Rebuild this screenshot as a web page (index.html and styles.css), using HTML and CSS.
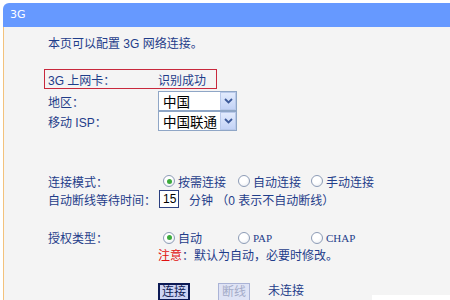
FILE: index.html
```html
<!DOCTYPE html>
<html>
<head>
<meta charset="utf-8">
<link rel="stylesheet" href="styles.css">
</head>
<body>
<div class="win">
  <div class="title">3G</div>
  <div class="body">
    <p class="intro">本页可以配置 3G 网络连接。</p>
    <div class="status"><span class="lbl">3G 上网卡：</span><span>识别成功</span></div>
    <div class="row sel-row">
      <span class="lbl">地区：</span>
      <div class="select"><span class="sv">中国</span><span class="arrow"><svg width="9" height="6" viewBox="0 0 9 6"><path d="M1 1 L4.5 4.5 L8 1" fill="none" stroke="#3d5a9a" stroke-width="1.8"/></svg></span></div>
    </div>
    <div class="row sel-row">
      <span class="lbl">移动 ISP：</span>
      <div class="select"><span class="sv">中国联通</span><span class="arrow"><svg width="9" height="6" viewBox="0 0 9 6"><path d="M1 1 L4.5 4.5 L8 1" fill="none" stroke="#3d5a9a" stroke-width="1.8"/></svg></span></div>
    </div>
    <div class="row mode-row">
      <span class="lbl">连接模式：</span>
      <div class="opts">
        <span class="opt o1"><span class="radio on"></span><span class="ol">按需连接</span></span>
        <span class="opt o2"><span class="radio"></span><span class="ol">自动连接</span></span>
        <span class="opt"><span class="radio"></span><span class="ol">手动连接</span></span>
      </div>
    </div>
    <div class="row time-row">
      <span class="lbl">自动断线等待时间：</span>
      <span class="input">15</span>
      <span class="unit">分钟 （0 表示不自动断线）</span>
    </div>
    <div class="row auth-row">
      <span class="lbl">授权类型：</span>
      <div class="opts">
        <span class="opt o1"><span class="radio on"></span><span class="ol">自动</span></span>
        <span class="opt o2"><span class="radio"></span><span class="ol serif">PAP</span></span>
        <span class="opt"><span class="radio"></span><span class="ol serif">CHAP</span></span>
      </div>
    </div>
    <div class="row note-row">
      <span class="lbl"></span>
      <span><span class="red">注意</span>：默认为自动，必要时修改。</span>
    </div>
    <div class="row btn-row">
      <span class="lbl"></span>
      <span class="btn">连接</span>
      <span class="btn off">断线</span>
      <span class="state">未连接</span>
      <span class="edge"></span>
    </div>
  </div>
</div>
</body>
</html>
```
FILE: styles.css
```css
html, body { margin: 0; padding: 0; }
body {
  background: #ffffff;
  font-family: "Liberation Sans", "Noto Sans CJK SC", sans-serif;
  font-size: 12px;
  color: #1f3d8a;
  width: 450px;
  height: 300px;
  overflow: hidden;
}
.win {
  margin: 3px 0 0 3px;
  height: 297px;
  display: flex;
  flex-direction: column;
}
.title {
  height: 24px;
  line-height: 24px;
  background: #6699ff;
  color: #ffffff;
  font-family: "DejaVu Sans", sans-serif;
  font-size: 11px;
  padding-left: 7px;
  border-top-left-radius: 6px;
}
.body {
  flex: 1;
  background: #f4f4f4;
  border-left: 1px solid #f3c27c;
  padding: 8px 0 0 40px;
}
.intro {
  margin: 0;
  height: 18px;
  line-height: 18px;
  padding-left: 4px;
}
.status {
  margin-top: 16px;
  width: 173px;
  height: 20px;
  box-sizing: border-box;
  border: 1px solid #c8283c;
  padding-left: 3px;
  display: flex;
  align-items: center;
}
.lbl {
  width: 110px;
  flex: none;
}
.row {
  display: flex;
  align-items: center;
  padding-left: 4px;
}
.sel-row { height: 20px; }
.sel-row:first-of-type { margin-top: 2px; }
.status + .sel-row { margin-top: 2px; }
.select {
  width: 79px;
  height: 20px;
  box-sizing: border-box;
  border: 1px solid #8fa6c6;
  background: #ffffff;
  display: flex;
  align-items: stretch;
  font-family: "Noto Sans CJK SC", sans-serif;
  font-size: 13.5px;
  color: #000000;
}
.sv {
  flex: 1;
  padding-left: 4px;
  line-height: 18px;
}
.arrow {
  width: 16px;
  box-sizing: border-box;
  border: 1px solid #b9c9ea;
  background: linear-gradient(#e2ebfd, #c3d3f6);
  display: flex;
  align-items: center;
  justify-content: center;
}
.mode-row { margin-top: 41px; height: 18px; }
.time-row { height: 18px; }
.auth-row { margin-top: 21px; height: 17px; }
.note-row { height: 16px; }
.btn-row { margin-top: 21px; height: 18px; align-items: flex-start; }
.opts { display: flex; align-items: center; }
.opt { display: flex; align-items: center; }
.o1 { width: 75px; }
.o2 { width: 73px; }
.radio {
  width: 12px;
  height: 12px;
  box-sizing: border-box;
  margin-left: 5px;
  border: 1px solid #8d9cb6;
  border-radius: 50%;
  background: radial-gradient(circle at 40% 35%, #ffffff 40%, #e4e8ee 100%);
  display: flex;
  align-items: center;
  justify-content: center;
}
.radio.on::after {
  content: "";
  width: 5px;
  height: 5px;
  border-radius: 50%;
  background: #3caa3c;
}
.ol { margin-left: 3px; }
.serif {
  font-family: "Liberation Serif", serif;
  font-size: 11px;
}
.input {
  width: 20px;
  height: 18px;
  box-sizing: border-box;
  margin-left: 1px;
  border: 1px solid #2a3f80;
  background: #ffffff;
  color: #000000;
  font-size: 12px;
  line-height: 16px;
  padding-left: 3px;
}
.unit { margin-left: 10px; }
.red { color: #e01010; }
.btn {
  width: 32px;
  height: 18px;
  box-sizing: border-box;
  border: 2px solid #0c1a55;
  background: #ccd3f3;
  color: #0c1a55;
  text-align: center;
  line-height: 14px;
  font-size: 12px;
}
.btn.off {
  margin-left: 28px;
  border: 1px solid #aab3d6;
  background: #dfe3f5;
  color: #a4abc8;
  line-height: 16px;
}
.state {
  margin-left: 18px;
  line-height: 16px;
}
.edge {
  margin-left: auto;
  margin-top: 12px;
  width: 78px;
  height: 5px;
  background: #ffffff;
}
```
